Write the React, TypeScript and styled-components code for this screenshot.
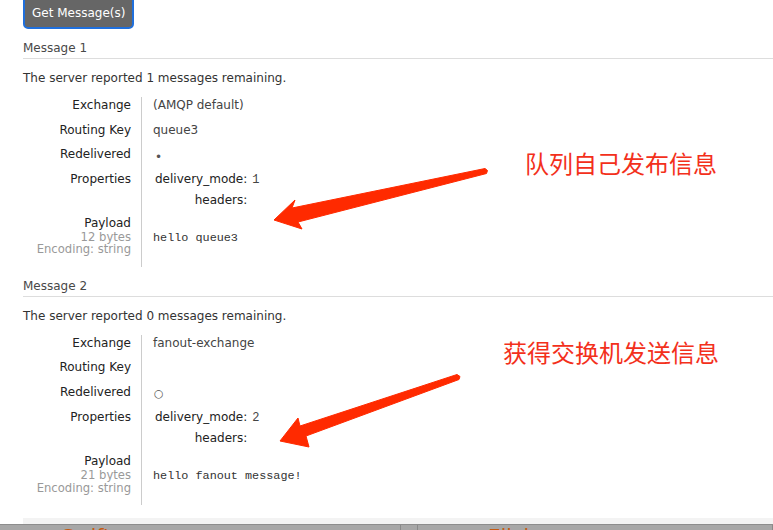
import React from "react";
import styled, { createGlobalStyle } from "styled-components";

const GlobalStyle = createGlobalStyle`
  html, body {
    margin: 0;
    padding: 0;
    background: #fff;
  }
  body {
    font-family: "DejaVu Sans", Verdana, sans-serif;
    font-size: 12px;
    color: #333;
  }
`;

const Page = styled.div`
  position: relative;
  width: 773px;
  height: 530px;
  overflow: hidden;
  display: flex;
  flex-direction: column;
`;

const Content = styled.div`
  padding-left: 23px;
  display: flex;
  flex-direction: column;
  align-items: flex-start;
`;

const GetButton = styled.button`
  margin-top: -8px;
  padding: 11px 7px 6px;
  font-family: "DejaVu Sans", Verdana, sans-serif;
  font-size: 12px;
  line-height: 16px;
  color: #fff;
  background: #666;
  border: 2px solid #1f6fdc;
  border-radius: 5px;
`;

const MessageTitle = styled.h3`
  align-self: stretch;
  margin: 11px 0 0;
  padding-bottom: 2px;
  font-size: 12px;
  line-height: 16px;
  font-weight: normal;
  color: #484848;
  border-bottom: 1px solid #ddd;
`;

const Remaining = styled.p`
  margin: 11px 0 0;
  line-height: 16px;
  color: #333;
`;

const Facts = styled.div`
  margin-top: 11px;
  display: grid;
  grid-template-columns: 118px auto;
  line-height: 16px;
`;

const Label = styled.div<{ $bottom?: number }>`
  padding: 0 10px ${(p) => p.$bottom ?? 8.5}px 0;
  text-align: right;
  color: #222;
`;

const Value = styled.div<{ $top?: number; $bottom?: number }>`
  border-left: 1px solid #ccc;
  padding: ${(p) => p.$top ?? 0}px 0 ${(p) => p.$bottom ?? 8.5}px 11px;
  color: #444;
  min-width: 200px;
`;

const Sub = styled.div`
  font-size: 11.6px;
  line-height: 12.5px;
  color: #999;
`;

const Props = styled.div`
  display: grid;
  grid-template-columns: auto auto;
  column-gap: 5px;
  row-gap: 5px;
  padding-left: 2px;
  justify-content: start;
`;

const PropKey = styled.span`
  text-align: right;
  color: #222;
`;

const PropVal = styled.span`
  position: relative;
  top: 1px;
  font-family: "Liberation Mono", "Courier New", monospace;
  font-size: 12px;
  color: #444;
`;

const Pre = styled.pre`
  margin: 0;
  font-family: "Liberation Mono", "Courier New", monospace;
  font-size: 11.8px;
  line-height: 16px;
  color: #333;
`;

const Bool = styled.span<{ $on: boolean }>`
  position: relative;
  top: ${(p) => (p.$on ? 3 : 1)}px;
  margin-left: ${(p) => (p.$on ? 2 : 1)}px;
  font-size: ${(p) => (p.$on ? 12 : 11)}px;
  color: #555;
`;

const Note = styled.div<{ $x: number; $y: number }>`
  position: absolute;
  left: ${(p) => p.$x}px;
  top: ${(p) => p.$y}px;
  font-family: "Noto Sans CJK SC", sans-serif;
  font-size: 24px;
  line-height: 24px;
  color: #f3301b;
  white-space: nowrap;
`;

const Overlay = styled.svg`
  position: absolute;
  left: 0;
  top: 0;
  pointer-events: none;
`;

const Footer = styled.div`
  margin-top: auto;
  display: flex;
  flex-direction: column;
`;

const FooterFade = styled.div`
  margin-left: 23px;
  height: 6px;
  background: #f3f3f3;
`;

const FooterBar = styled.div`
  height: 5px;
  display: flex;
  overflow: hidden;
  background: #a7a7a7;
  border-top: 1px solid #8d8d8d;
`;

const FooterCol = styled.div<{ $w?: number }>`
  width: ${(p) => (p.$w ? `${p.$w}px` : "auto")};
  flex: ${(p) => (p.$w ? "none" : 1)};
  border-right: 1px solid #8a8a8a;
  font-family: "DejaVu Sans", sans-serif;
  font-size: 20px;
  line-height: 20px;
  color: #c65b12;
  white-space: nowrap;
  padding-top: 1px;
`;

type Msg = {
  title: string;
  remaining: number;
  exchange: string;
  routingKey: string;
  redelivered: boolean;
  mode: number;
  bytes: number;
  payload: string;
};

const messages: Msg[] = [
  {
    title: "Message 1",
    remaining: 1,
    exchange: "(AMQP default)",
    routingKey: "queue3",
    redelivered: true,
    mode: 1,
    bytes: 12,
    payload: "hello queue3",
  },
  {
    title: "Message 2",
    remaining: 0,
    exchange: "fanout-exchange",
    routingKey: "",
    redelivered: false,
    mode: 2,
    bytes: 21,
    payload: "hello fanout message!",
  },
];

const Message: React.FC<{ msg: Msg }> = ({ msg }) => (
  <>
    <MessageTitle>{msg.title}</MessageTitle>
    <Remaining>
      The server reported {msg.remaining} messages remaining.
    </Remaining>
    <Facts>
      <Label>Exchange</Label>
      <Value>{msg.exchange}</Value>
      <Label>Routing Key</Label>
      <Value>{msg.routingKey || "\u00a0"}</Value>
      <Label>Redelivered</Label>
      <Value>
        <Bool $on={msg.redelivered}>{msg.redelivered ? "•" : "○"}</Bool>
      </Value>
      <Label $bottom={7}>Properties</Label>
      <Value $bottom={7}>
        <Props>
          <PropKey>delivery_mode:</PropKey>
          <PropVal>{msg.mode}</PropVal>
          <PropKey>headers:</PropKey>
          <PropVal />
        </Props>
      </Value>
      <Label $bottom={11}>
        Payload
        <Sub>{msg.bytes} bytes</Sub>
        <Sub>Encoding: string</Sub>
      </Label>
      <Value $top={15} $bottom={11}>
        <Pre>{msg.payload}</Pre>
      </Value>
    </Facts>
  </>
);

export default function App() {
  return (
    <>
      <GlobalStyle />
      <Page>
        <Content>
          <GetButton>Get Message(s)</GetButton>
          {messages.map((m) => (
            <Message key={m.title} msg={m} />
          ))}
        </Content>
        <Footer>
          <FooterFade />
          <FooterBar>
            <FooterCol $w={400}>
              <span style={{ marginLeft: 36 }}>•</span>
              <span style={{ marginLeft: 14 }}>Swift</span>
            </FooterCol>
            <FooterCol $w={16} />
            <FooterCol>
              <span style={{ marginLeft: 70 }}>Elixir</span>
            </FooterCol>
          </FooterBar>
        </Footer>
        <Note $x={525} $y={151}>队列自己发布信息</Note>
        <Note $x={503} $y={340}>获得交换机发送信息</Note>
        <Overlay width={773} height={530} viewBox="0 0 773 530">
          <g fill="#ff2a00" stroke="#ff2a00" strokeWidth={1} strokeLinejoin="round">
            <polygon points="274,220 295,200 292,208 485,168.5 487.5,170.5 486.5,173.5 298,222 302,229" />
            <polygon points="280,441 298,418 300,426 457,374.5 460,376.5 459,379.5 306,436 309,447" />
          </g>
        </Overlay>
      </Page>
    </>
  );
}
